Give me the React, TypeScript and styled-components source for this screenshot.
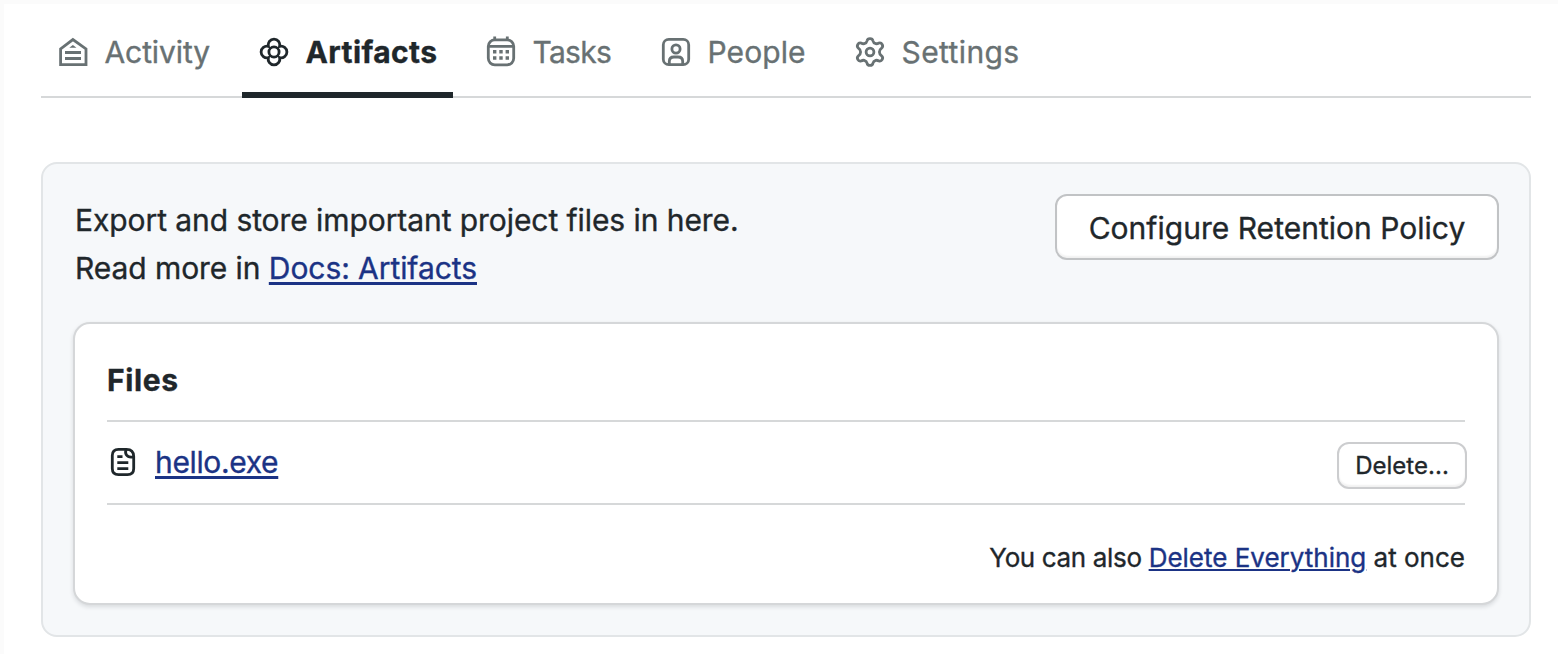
import React from 'react';
import styled, { createGlobalStyle } from 'styled-components';

const Global = createGlobalStyle`
  *, *::before, *::after { box-sizing: border-box; }
  body { margin: 0; background: #fbfbfb; }
`;

const Page = styled.div`
  height: 654px;
  padding: 4px 0 0 4px;
  overflow: hidden;
  font-family: Inter, "Liberation Sans", sans-serif;
  font-size: 30px;
  color: #1f272b;
  -webkit-text-stroke: 0.35px currentColor;
`;

const Sheet = styled.main`
  height: 650px;
  padding: 0 27px 0 37px;
  background: #fff;
`;

const Tabs = styled.nav`
  display: flex;
  gap: 16px;
  height: 94px;
  border-bottom: 2px solid #d6d8d9;
`;

const Tab = styled.a<{ $active?: boolean; $width: number; $tracking?: number }>`
  display: flex;
  flex: none;
  align-items: center;
  gap: 15.5px;
  width: ${p => p.$width}px;
  height: 94px;
  padding: 7px 0 0 16px;
  border-bottom: 6px solid ${p => (p.$active ? '#1f272b' : 'transparent')};
  color: ${p => (p.$active ? '#1f272b' : '#687173')};
  font-weight: ${p => (p.$active ? 700 : 400)};
  letter-spacing: ${p => p.$tracking ?? 0}px;
  line-height: 40px;
  white-space: nowrap;
`;

const Icon = styled.svg`
  flex: none;
  width: 32px;
  height: 32px;
  fill: none;
  stroke: currentColor;
  stroke-width: 2.8;
`;

const Panel = styled.section`
  margin-top: 64px;
  height: 475px;
  padding: 30px;
  border: 2px solid #e2e5e7;
  border-radius: 16px;
  background: #f6f8fa;
`;

const Intro = styled.div`
  display: flex;
  justify-content: space-between;
  align-items: flex-start;
  height: 128px;
`;

const Description = styled.p`
  margin: 2px 0 0 2px;
  line-height: 48px;
  letter-spacing: -0.07px;
`;

const Link = styled.a<{ $thin?: boolean }>`
  color: #1b3385;
  text-decoration: underline;
  text-decoration-thickness: ${p => (p.$thin ? 2 : 2.7)}px;
  text-underline-offset: ${p => (p.$thin ? 2 : 2.5)}px;
`;

const Button = styled.button<{ $small?: boolean }>`
  width: ${p => (p.$small ? 130 : 444)}px;
  height: ${p => (p.$small ? 47 : 66)}px;
  margin-top: ${p => (p.$small ? 4 : 0)}px;
  padding: ${p => (p.$small ? 0 : 2)}px 0 0;
  border: 2px solid ${p => (p.$small ? '#cccdcf' : '#c1c3c5')};
  border-radius: 12px;
  background: #fff;
  box-shadow: inset 0 -2px 2px rgba(0, 0, 0, 0.06);
  color: inherit;
  font: ${p => (p.$small ? 24 : 30)}px Inter, "Liberation Sans", sans-serif;
  letter-spacing: 0.02px;
  white-space: nowrap;
`;

const Card = styled.div`
  height: 283px;
  padding: 32px 32px 0;
  border: 2px solid #d5d7d9;
  border-radius: 17px;
  background: #fff;
  box-shadow: 0 2px 4px rgba(20, 30, 40, 0.13);
`;

const Heading = styled.h2`
  height: 66px;
  margin: 0;
  border-bottom: 2px solid #d6d8d9;
  font-size: 30px;
  font-weight: 700;
  line-height: 48px;
  letter-spacing: 0.6px;
`;

const RowRule = styled.div`
  height: 83px;
  border-bottom: 2px solid #d6d8d9;
`;

const FileRow = styled.div`
  display: flex;
  align-items: center;
  justify-content: space-between;
  height: 83px;
  margin-right: -2px;
`;

const FileName = styled.span`
  display: flex;
  align-items: center;
  gap: 16px;
  padding-bottom: 4px;
  letter-spacing: -0.35px;
`;

const Footer = styled.p`
  margin: 33px 0 0;
  font-size: 26px;
  line-height: 40px;
  text-align: right;
`;

const Lead = styled.span`
  letter-spacing: -0.35px;
`;

const ActivityIcon = () => (
  <Icon viewBox="57 36 32 32">
    <path d="M60.6 64.7V48.9L72.9 39.6L86 48.9V64.7Z" />
    <path d="M65 52.5H81M65 58.5H81" />
    <path d="M69.3 47.8L72.9 44.9L76.5 47.8Z" fill="currentColor" stroke="none" />
  </Icon>
);

const ArtifactsIcon = () => (
  <Icon viewBox="-16 -16 32 32">
    <path d="M-5.6 -5.6A5.8 5.8 0 1 1 5.6 -5.6A5.8 5.8 0 1 1 5.6 5.6A5.8 5.8 0 1 1 -5.6 5.6A5.8 5.8 0 1 1 -5.6 -5.6Z" />
    <circle r="5.1" />
  </Icon>
);

const TasksIcon = () => (
  <Icon viewBox="485 36 32 32">
    <rect x="488.3" y="39.8" width="25.4" height="25" rx="6.5" />
    <path d="M488 46.3H514M494.7 36.6V39.8M507.3 36.6V39.8" />
    <path d="M493 51.8h3.4M499.3 51.8h3.4M505.6 51.8h3.4M493 58h3.4M499.3 58h3.4M505.6 58h3.4" strokeWidth="3.4" />
  </Icon>
);

const PeopleIcon = () => (
  <Icon viewBox="660 36 32 32">
    <rect x="663.3" y="39.3" width="25.4" height="25.4" rx="5.5" />
    <circle cx="676" cy="49" r="4.1" />
    <path d="M669.3 64.5V61.5Q669.3 57 674 57H678Q682.7 57 682.7 61.5V64.5" />
  </Icon>
);

const SettingsIcon = () => (
  <Icon viewBox="-16 -16 32 32">
    <circle r="3.9" />
    <path
      strokeLinejoin="round"
      d="M-2.9 -11.2Q-2.6 -13.4 0 -13.4Q2.6 -13.4 2.9 -11.2Q3.4 -8.9 5.7 -8.3Q7.2 -8 8.9 -9Q11.2 -9.6 12.2 -7.5Q13.4 -5.2 11.6 -3.8Q9.4 -2.2 9.4 0Q9.4 2.2 11.6 3.8Q13.4 5.2 12.2 7.5Q11.2 9.6 8.9 9Q7.2 8 5.7 8.3Q3.4 8.9 2.9 11.2Q2.6 13.4 0 13.4Q-2.6 13.4 -2.9 11.2Q-3.4 8.9 -5.7 8.3Q-7.2 8 -8.9 9Q-11.2 9.6 -12.2 7.5Q-13.4 5.2 -11.6 3.8Q-9.4 2.2 -9.4 0Q-9.4 -2.2 -11.6 -3.8Q-13.4 -5.2 -12.2 -7.5Q-11.2 -9.6 -8.9 -9Q-7.2 -8 -5.7 -8.3Q-3.4 -8.9 -2.9 -11.2Z"
    />
  </Icon>
);

const FileIcon = () => (
  <Icon viewBox="107 446 32 32">
    <path d="M126.5 449.3H118.5Q112.3 449.3 112.3 455.5V468.5Q112.3 474.7 118.5 474.7H127.5Q133.7 474.7 133.7 468.5V456.5Q133.7 449.3 126.5 449.3Z" />
    <path d="M126.3 449.5Q124.8 451.8 126.3 454.8Q128.5 458 133.5 456.8M117.3 456.7H122.5M117.3 462.7H128.3M117.3 468.7H128.3" />
  </Icon>
);

export default function App() {
  return (
    <Page>
      <Global />
      <Sheet>
        <Tabs>
          <Tab $width={185} $tracking={-0.1}><ActivityIcon />Activity</Tab>
          <Tab $width={211} $active $tracking={0.4}><ArtifactsIcon />Artifacts</Tab>
          <Tab $width={159} $tracking={-0.7}><TasksIcon />Tasks</Tab>
          <Tab $width={178} $tracking={0.1}><PeopleIcon />People</Tab>
          <Tab $width={200} $tracking={0.4}><SettingsIcon />Settings</Tab>
        </Tabs>
        <Panel>
          <Intro>
            <Description>
              Export and store important project files in here.
              <br />
              Read more in <Link>Docs: Artifacts</Link>
            </Description>
            <Button>Configure Retention Policy</Button>
          </Intro>
          <Card>
            <Heading>Files</Heading>
            <RowRule>
              <FileRow>
                <FileName><FileIcon /><Link>hello.exe</Link></FileName>
                <Button $small>Delete...</Button>
              </FileRow>
            </RowRule>
            <Footer>
              <Lead>You can also </Lead><Link $thin>Delete Everything</Link> at once
            </Footer>
          </Card>
        </Panel>
      </Sheet>
    </Page>
  );
}
